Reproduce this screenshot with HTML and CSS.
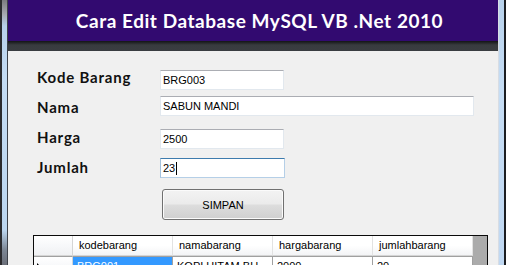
FILE: index.html
```html
<!DOCTYPE html>
<html>
<head>
<meta charset="utf-8">
<link rel="stylesheet" href="styles.css">
</head>
<body>
<div class="screen">
  <div class="frame-left"></div>
  <div class="window">
    <div class="titlebar"><h1 class="title">Cara Edit Database MySQL VB .Net 2010</h1></div>
    <div class="shadow-band"></div>
    <div class="content">
      <div class="form">
        <div class="field">
          <label class="label">Kode Barang</label>
          <div class="textbox tb-short tb-kode">BRG003</div>
        </div>
        <div class="field">
          <label class="label">Nama</label>
          <div class="textbox tb-long tb-nama">SABUN MANDI</div>
        </div>
        <div class="field">
          <label class="label">Harga</label>
          <div class="textbox tb-short tb-harga">2500</div>
        </div>
        <div class="field">
          <label class="label">Jumlah</label>
          <div class="textbox tb-short tb-jumlah focused">23<span class="caret"></span></div>
        </div>
      </div>
      <button class="btn">SIMPAN</button>
      <div class="datagrid">
        <div class="grid-row header-row">
          <div class="rowhead"></div>
          <div class="cell hcell">kodebarang</div>
          <div class="cell hcell">namabarang</div>
          <div class="cell hcell">hargabarang</div>
          <div class="cell hcell">jumlahbarang</div>
        </div>
        <div class="grid-row data-row">
          <div class="rowhead"><span class="arrow"></span></div>
          <div class="cell dcell selected">BRG001</div>
          <div class="cell dcell">KOPI HITAM BU</div>
          <div class="cell dcell">2000</div>
          <div class="cell dcell">20</div>
        </div>
      </div>
    </div>
  </div>
  <div class="frame-right"></div>
</div>
</body>
</html>
```
FILE: styles.css
```css
html, body {
  margin: 0;
  padding: 0;
}
body {
  width: 506px;
  height: 265px;
  overflow: hidden;
  background: #f0f0f0;
}
.screen {
  display: flex;
  width: 506px;
  height: 265px;
}
.frame-left {
  width: 8px;
  flex: none;
  box-sizing: border-box;
  border-left: 2px solid #2b2b2e;
  border-right: 1px solid #3c4048;
  background: linear-gradient(to bottom, #7b7b80 0px, #a6a8b0 14px, #b8d0ea 26px, #c4dcf4 80px, #bcd6f0 230px, #7c8694 250px, #6a6e78 265px);
}
.frame-right {
  width: 8px;
  flex: none;
  box-sizing: border-box;
  border-left: 1px solid #d8dde4;
  border-right: 2px solid #1c1e22;
  background: linear-gradient(to bottom, #b8d2ec 0px, #c6ddf4 90px, #c0d8f2 265px);
}
.window {
  width: 490px;
  height: 265px;
  flex: none;
  display: flex;
  flex-direction: column;
  overflow: hidden;
}
.titlebar {
  flex: none;
  height: 41px;
  background: #320a70;
  display: flex;
  align-items: center;
  justify-content: center;
}
.title {
  margin: 0;
  padding-left: 13px;
  color: #ffffff;
  font-family: Lato, "DejaVu Sans", sans-serif;
  font-weight: 700;
  font-size: 19px;
  line-height: 22px;
  letter-spacing: 0.55px;
}
.shadow-band {
  flex: none;
  height: 10px;
  background: linear-gradient(to bottom, #141416 0px, #25272a 2px, #383b3f 4px, #3a3d41 10px);
}
.content {
  flex: none;
  height: 214px;
  background: #f0f0f0;
  padding: 15px 0 0 25px;
  overflow: hidden;
}
.form {
  padding-left: 4px;
}
.field {
  display: flex;
  align-items: flex-start;
  height: 30px;
}
.label {
  width: 123px;
  flex: none;
  font-family: Lato, "DejaVu Sans", sans-serif;
  font-weight: 700;
  font-size: 15px;
  line-height: 22px;
  letter-spacing: 0.8px;
  color: #111111;
}
.textbox {
  box-sizing: border-box;
  height: 20px;
  background: #ffffff;
  border: 1px solid #e2e8ee;
  border-top-color: #abadb3;
  font-family: "Liberation Sans", Arial, sans-serif;
  font-size: 11px;
  line-height: 18px;
  padding-left: 2px;
  color: #000000;
}
.tb-short { width: 124px; }
.tb-long { width: 314px; }
.tb-kode { margin-top: 4px; }
.tb-nama { margin-top: 0; }
.tb-harga { margin-top: 3px; }
.tb-jumlah { margin-top: 2px; width: 125px; }
.focused {
  border-color: #b5cfe7;
  border-top-color: #3d7bad;
  border-left-color: #a4c2dd;
}
.caret {
  display: inline-block;
  width: 1px;
  height: 13px;
  background: #000;
  vertical-align: -3px;
  margin-left: 1px;
}
.btn {
  display: block;
  margin: 3px 0 0 129px;
  width: 122px;
  height: 31px;
  box-sizing: border-box;
  border: 1px solid #707070;
  border-radius: 3px;
  background: linear-gradient(to bottom, #f3f3f3 0%, #ebebeb 48%, #dddddd 52%, #cfcfcf 100%);
  box-shadow: inset 0 0 0 1px #fbfbfb;
  font-family: "Liberation Sans", Arial, sans-serif;
  font-size: 11px;
  color: #000;
  padding: 0;
}
.datagrid {
  margin-top: 15px;
  width: 455px;
  height: 40px;
  box-sizing: border-box;
  border: 1px solid #0a0a0a;
  border-bottom: none;
  background: #ababab;
  overflow: hidden;
}
.grid-row {
  display: flex;
}
.header-row {
  height: 20px;
}
.rowhead {
  width: 39px;
  flex: none;
  box-sizing: border-box;
  border-right: 1px solid #d5d5d5;
  background: linear-gradient(to bottom, #ffffff 0%, #f7f8fa 50%, #f0f1f3 100%);
  position: relative;
}
.header-row .rowhead {
  border-bottom: 1px solid #d5d5d5;
}
.cell {
  width: 100px;
  flex: none;
  box-sizing: border-box;
  font-family: "Liberation Sans", Arial, sans-serif;
  font-size: 11px;
  white-space: nowrap;
  overflow: hidden;
}
.hcell {
  height: 20px;
  line-height: 18px;
  padding-left: 6px;
  color: #000;
  border-right: 1px solid #e2e2e2;
  border-bottom: 1px solid #d5d5d5;
  background: linear-gradient(to bottom, #ffffff 0%, #ffffff 50%, #f3f4f6 100%);
}
.data-row {
  height: 20px;
}
.data-row .rowhead {
  border-top: 1px solid #a0a0a0;
}
.dcell {
  height: 20px;
  line-height: 18px;
  padding: 0 0 0 4px;
  background: #ffffff;
  color: #000;
  border-right: 1px solid #a0a0a0;
  border-top: 1px solid #a0a0a0;
}
.selected {
  background: #3399ff;
  color: #ffffff;
}
.arrow {
  position: absolute;
  left: 3px;
  top: 6px;
  width: 0;
  height: 0;
  border-top: 3px solid transparent;
  border-bottom: 3px solid transparent;
  border-left: 3px solid #000;
}
```
